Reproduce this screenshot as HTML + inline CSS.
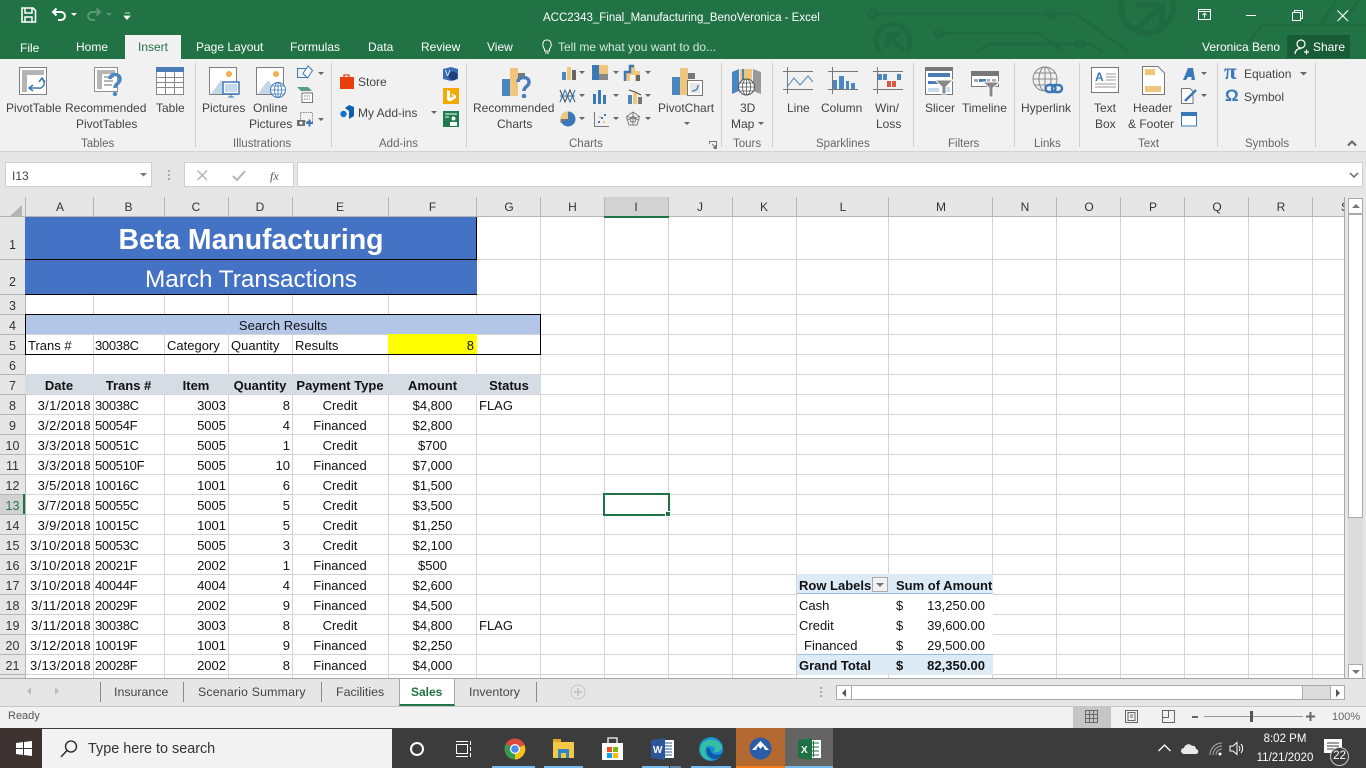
<!DOCTYPE html>
<html><head><meta charset="utf-8"><title>Excel</title>
<style>
html,body{margin:0;padding:0;width:1366px;height:768px;overflow:hidden;background:#fff;font-family:"Liberation Sans",sans-serif;color:#444}
.t{position:absolute;white-space:nowrap;line-height:14px}
.bx{position:absolute}
svg{position:absolute;overflow:visible}
.tab{position:absolute;top:40px;font-size:12px;color:#fff;line-height:14px;white-space:nowrap}
.r{font-size:12px;color:#444}
.g{font-size:11.5px;color:#666;top:137px}
.row{position:absolute;left:0;width:1344px;height:20px;font-size:13px;color:#111;line-height:20px}
.row span{position:absolute;top:2px;white-space:nowrap}
.rh{left:0;width:25px;text-align:center;color:#333;font-size:12.5px}
.a{left:25px;width:66px;text-align:right;letter-spacing:.35px}
.b{left:95px;letter-spacing:-.3px}
.c{left:164px;width:62px;text-align:right}
.d{left:228px;width:62px;text-align:right}
.e{left:292px;width:96px;text-align:center}
.f{left:388px;width:89px;text-align:center}
.h{font-weight:bold}
.ch{position:absolute;top:198px;height:19px;line-height:19px;text-align:center;font-size:12px;color:#333}
.st{font-size:12.4px;color:#444;top:685px}
</style></head><body>

<!-- title bar -->
<div class="bx" style="left:0;top:0;width:1366px;height:59px;background:#217346"></div>
<svg style="left:0;top:0;overflow:hidden" width="1366" height="52" fill="none" stroke="#1f6a41" stroke-width="3">
<path d="M873 14H1076L1129 52M939 33H1039L1064 52M976 52L989 44H1079L1090 44L1103 52"/>
<circle cx="1051" cy="14" r="4"/><circle cx="939" cy="33" r="4"/><circle cx="1080" cy="44" r="4"/><circle cx="873" cy="14" r="4"/>
<circle cx="1147" cy="7" r="26" stroke-width="6"/>
<path d="M1136 30L1160 7M1136 5H1162V30" stroke-width="6"/>
<circle cx="893" cy="41" r="17" stroke-width="5"/><path d="M903 50L889 37M887 48V35H900" stroke-width="5"/>
<path d="M1242 52L1262 25H1366M1320 25L1337 0M1340 25L1360 0" stroke-width="3"/>
</svg>
<!-- QAT -->
<svg style="left:21px;top:7px" width="16" height="16" fill="none" stroke="#fff" stroke-width="1.6"><path d="M1 1H12L14.5 3.500V15H1Z"/><path d="M4 1V6H11V1M4 15V10H11V15" stroke-width="1.5"/></svg>
<svg style="left:51px;top:7px" width="16" height="16" fill="none" stroke="#fff" stroke-width="2"><path d="M2 5H10A3.500 3.500 0 0 1 10 13H7M5.500 1.500L2 5L5.500 8.500"/></svg>
<svg style="left:71px;top:13px" width="7" height="4"><path d="M0 0H6L3 3Z" fill="#fff"/></svg>
<svg style="left:86px;top:7px" width="16" height="16" fill="none" stroke="#5a9775" stroke-width="2"><path d="M14 5H6A3.500 3.500 0 0 0 6 13H9M10.500 1.500L14 5L10.500 8.500"/></svg>
<svg style="left:106px;top:13px" width="7" height="4"><path d="M0 0H6L3 3Z" fill="#5a9775"/></svg>
<svg style="left:124px;top:13px" width="7" height="8"><path d="M1 0H6M0 3H6L3 6.500Z" fill="#fff" stroke="#fff" stroke-width=".7"/></svg>
<div class="t" style="left:543px;top:11px;font-size:11.5px;color:#fff">ACC2343_Final_Manufacturing_BenoVeronica - Excel</div>
<svg style="left:1198px;top:9px" width="14" height="12" fill="none" stroke="#fff"><rect x=".5" y=".5" width="12" height="10"/><path d="M.5 2.500H12.500M6.500 9V4.500M4.500 6L6.500 4.200L8.500 6"/></svg>
<div class="bx" style="left:1246px;top:15px;width:10px;height:1px;background:#fff"></div>
<svg style="left:1292px;top:10px" width="11" height="11" fill="none" stroke="#fff"><rect x=".5" y="2.500" width="8" height="8"/><path d="M2.500 2.500V.5H10.500V8.500H8.500"/></svg>
<svg style="left:1337px;top:10px" width="12" height="12" stroke="#fff" stroke-width="1.100"><path d="M.5 .5L11 11M11 .5L.5 11"/></svg>
<!-- tabs -->
<div class="tab" style="left:20px;top:41px">File</div>
<div class="tab" style="left:76px">Home</div>
<div class="bx" style="left:125px;top:35px;width:56px;height:24px;background:#f1f1f1"></div>
<div class="tab" style="left:138px;color:#217346">Insert</div>
<div class="tab" style="left:196px">Page Layout</div>
<div class="tab" style="left:290px">Formulas</div>
<div class="tab" style="left:368px">Data</div>
<div class="tab" style="left:421px">Review</div>
<div class="tab" style="left:487px">View</div>
<svg style="left:541px;top:39px" width="12" height="16" fill="none" stroke="#fff"><path d="M3.500 10C1 7 1 1 6 1S11 7 8.500 10V12H3.500ZM4 14H8"/></svg>
<div class="tab" style="left:558px;color:#d6e9dd">Tell me what you want to do...</div>
<div class="tab" style="left:1202px">Veronica Beno</div>
<div class="bx" style="left:1287px;top:35px;width:63px;height:23px;background:#185c37"></div>
<svg style="left:1294px;top:39px" width="15" height="16" fill="none" stroke="#fff" stroke-width="1.200"><circle cx="7" cy="5" r="4"/><path d="M1 15C1.500 11 3.500 9.500 7 9.500M10 13H15M12.500 10.500V15.500"/></svg>
<div class="tab" style="left:1313px">Share</div>

<!-- ribbon -->
<div class="bx" style="left:0;top:59px;width:1366px;height:93px;background:#f1f1f1"></div>
<div class="bx" style="left:0;top:151px;width:1366px;height:1px;background:#d2d2d2"></div>
<svg style="left:0;top:59px" width="1366" height="90" stroke="#d0d0d0"><path d="M195.500 4V88M331.500 4V88M466.500 4V88M721.500 4V88M772.500 4V88M913.500 4V88M1014.500 4V88M1079.500 4V88M1217.500 4V88M1315.500 4V88"/></svg>

<!-- Ribbon icons -->
<svg style="left:19px;top:67px" width="28" height="28"><rect x=".5" y=".5" width="27" height="27" fill="#fff" stroke="#808080"/><path d="M3 3H25V8H3ZM3 8H8V25H3Z" fill="#b5b5b5"/><path d="M11 21H19A5 5 0 0 0 23 12M20 15L23 11L26 15M14 18L10 21L14 24" fill="none" stroke="#3b78b7" stroke-width="1.500"/></svg>
<svg style="left:94px;top:67px" width="29" height="30"><rect x=".5" y=".5" width="23" height="24" fill="#fff" stroke="#909090"/><path d="M3 3H21V7H3ZM3 7H8V22H3Z" fill="#b5b5b5"/><path d="M10 10H20M10 14H19M10 18H18" stroke="#b5b5b5" stroke-width="2"/><path d="M16 12C16 6 26 6 26 12C26 17 21 16 21 21" fill="none" stroke="#4a86c0" stroke-width="3.500"/><circle cx="21" cy="27" r="2.200" fill="#4a86c0"/></svg>
<svg style="left:156px;top:67px" width="28" height="28"><rect x=".5" y=".5" width="27" height="27" fill="#fff" stroke="#8a8a8a"/><rect x="0" y="0" width="28" height="5" fill="#4a7db5"/><path d="M1 10.500H27M1 15.500H27M1 20.500H27M9.500 5V27M18.500 5V27" stroke="#8a8a8a"/></svg>
<svg style="left:209px;top:67px" width="31" height="31"><rect x=".5" y=".5" width="27" height="27" fill="#fff" stroke="#808080"/><circle cx="20" cy="7" r="3" fill="#f0b050"/><path d="M2 27L12 13L22 27Z" fill="#c5d6e8"/><rect x="14" y="15" width="16" height="12" fill="#fff" stroke="#3b78b7" stroke-width="1.500"/><rect x="16" y="17" width="12" height="8" fill="#c5d9ec"/><path d="M19 30H25M22 27V30" stroke="#3b78b7"/></svg>
<svg style="left:256px;top:67px" width="31" height="31"><rect x=".5" y=".5" width="27" height="27" fill="#fff" stroke="#808080"/><circle cx="20" cy="7" r="3" fill="#f0b050"/><path d="M2 27L12 13L22 27Z" fill="#c5d6e8"/><circle cx="22" cy="23" r="7.500" fill="#fff" stroke="#3b78b7"/><path d="M14.500 23H29.500M22 15.500V30.500M16 19H28M16 27H28" stroke="#3b78b7" stroke-width=".8"/><ellipse cx="22" cy="23" rx="3.500" ry="7.500" fill="none" stroke="#3b78b7" stroke-width=".8"/></svg>
<svg style="left:297px;top:65px" width="17" height="16" fill="none"><rect x=".5" y="3.500" width="9" height="9" stroke="#3b78b7"/><path d="M11 1L15.500 5.500L10.500 13L6 8.500Z" fill="#fff" stroke="#3b78b7"/></svg>
<svg style="left:297px;top:87px" width="17" height="17"><path d="M0 0H11L15 4H4Z" fill="#5a9e7c"/><rect x="5" y="6" width="10.500" height="9.500" fill="#fff" stroke="#777"/><path d="M7 9H13M7 12H13" stroke="#777" stroke-dasharray="1.500 1"/></svg>
<svg style="left:297px;top:112px" width="17" height="16"><rect x="3.500" y=".5" width="12" height="9" fill="none" stroke="#888" stroke-dasharray="1.500 1"/><rect x="0" y="8" width="8" height="6" fill="#6f6f6f"/><circle cx="4" cy="11" r="1.500" fill="#fff"/><path d="M9 11H16M12.500 7.500V14.500" stroke="#3b78b7" stroke-width="2"/></svg>
<svg style="left:318px;top:72px" width="6" height="60" fill="#666"><path d="M0 0H6L3 3ZM0 46H6L3 49Z"/></svg>
<svg style="left:340px;top:73px" width="15" height="16"><path d="M0 4H14V16H0Z" fill="#e8400c"/><path d="M4 4V2H9V4" fill="none" stroke="#e8400c" stroke-width="1.200"/></svg>
<div class="t r" style="left:358px;top:75px">Store</div>
<svg style="left:340px;top:105px" width="15" height="14"><path d="M5 3L9 0L14 2V11L9 14V6Z" fill="#0f5fb0"/><circle cx="3.500" cy="9" r="3.200" fill="#1173cf"/></svg>
<div class="t r" style="left:358px;top:106px">My Add-ins</div>
<svg style="left:431px;top:111px" width="6" height="4"><path d="M0 0H6L3 3Z" fill="#666"/></svg>
<svg style="left:443px;top:66px" width="16" height="16"><path d="M0 3L8 1L15 3V13L8 15L0 13Z" fill="#3a6bb5"/><circle cx="10" cy="10" r="4.500" fill="#1e3f7a"/><text x="2" y="10" font-size="8" fill="#fff" font-family="Liberation Sans">V</text></svg>
<svg style="left:443px;top:88px" width="16" height="16"><rect width="16" height="16" fill="#f2a900"/><path d="M4 2L7 3V10L11 8L8.500 7L8 5.500L13 7.500V10L7 13.500L4 12Z" fill="#fff"/></svg>
<svg style="left:443px;top:111px" width="16" height="16"><rect width="16" height="16" fill="#1f7a4d"/><path d="M2 3H14M2 6H6" stroke="#fff"/><circle cx="10.500" cy="7.500" r="2" fill="#fff"/><path d="M7 15V11H14V15Z" fill="#fff"/></svg>

<svg style="left:501px;top:67px" width="30" height="32"><rect x="1" y="12" width="8" height="17" fill="#4a86c0"/><rect x="9" y="1" width="8" height="28" fill="#efc67c"/><rect x="17" y="6" width="7" height="6" fill="#777"/><path d="M17 15C17 9 28 9 28 15C28 20 23 19 23 24" fill="none" stroke="#4a7db5" stroke-width="3.500"/><circle cx="23" cy="29" r="2.300" fill="#4a7db5"/></svg>
<!-- small chart icons -->
<svg style="left:561px;top:65px" width="16" height="16"><rect x="1" y="7" width="4" height="8" fill="#4a86c0"/><rect x="6" y="2" width="4" height="13" fill="#efc67c"/><rect x="11" y="5" width="4" height="10" fill="#666"/></svg>
<svg style="left:592px;top:65px" width="18" height="16"><rect x="0" y="0" width="7" height="15" fill="#3a78b8"/><rect x="7" y="0" width="9" height="9" fill="#efc67c"/><rect x="7" y="9" width="9" height="6" fill="#888"/></svg>
<svg style="left:625px;top:66px" width="16" height="15"><path d="M0 15V6H5V0H10V5H15V15H10V9H5V15Z" fill="#efc67c"/><path d="M0 15V6H5V0H9" fill="none" stroke="#3a78b8" stroke-width="2.500"/><rect x="11" y="9" width="4" height="6" fill="#666"/></svg>
<svg style="left:559px;top:88px" width="18" height="16" fill="none" stroke-width="1.100"><path d="M1 14L6 2L11 14L16 2" stroke="#3a78b8"/><path d="M1 2L6 14L11 2L16 14" stroke="#555"/><path d="M1 8H16" stroke="#3a78b8"/></svg>
<svg style="left:592px;top:89px" width="16" height="15" fill="#3a78b8"><path d="M1 5H4V15H1ZM6 1H9V15H6ZM11 6H14V15H11Z"/></svg>
<svg style="left:627px;top:88px" width="16" height="16"><rect x="1" y="7" width="4" height="9" fill="#4a86c0"/><rect x="6" y="5" width="4" height="11" fill="#efc67c"/><rect x="11" y="9" width="4" height="7" fill="#777"/><path d="M2 2L8 4L14 7" stroke="#444" fill="none"/></svg>
<svg style="left:560px;top:111px" width="16" height="16"><circle cx="8" cy="8" r="7.500" fill="#3a78b8"/><path d="M8 8V0.500A7.500 7.500 0 0 0 .5 8Z" fill="#efc67c"/><path d="M8 8H.5V12" fill="#777"/></svg>
<svg style="left:594px;top:112px" width="15" height="15" fill="none"><path d="M.5 0V14.500H15" stroke="#777"/><path d="M4 9h2v2H4zM7 5h2v2H7zM10 2h2v2h-2z" fill="#3a78b8"/><path d="M5 4h2v2H5zM9 9h2v2H9z" fill="#efc67c"/></svg>
<svg style="left:625px;top:111px" width="16" height="16" fill="none" stroke="#777" stroke-width=".9"><path d="M8 1L14.500 5.500L12 14H4L1.500 5.500ZM8 1V14M1.500 5.500L14.500 9M14.500 5.500L1.500 9"/><path d="M8 5L11 7.500L10 11H6L5 7.500Z"/></svg>
<svg style="left:579px;top:71px" width="6" height="60" fill="#666"><path d="M0 0H6L3 3ZM0 23H6L3 26ZM0 46H6L3 49Z"/></svg>
<svg style="left:613px;top:71px" width="6" height="60" fill="#666"><path d="M0 0H6L3 3ZM0 23H6L3 26ZM0 46H6L3 49Z"/></svg>
<svg style="left:645px;top:71px" width="6" height="60" fill="#666"><path d="M0 0H6L3 3ZM0 23H6L3 26ZM0 46H6L3 49Z"/></svg>
<svg style="left:672px;top:67px" width="31" height="30"><rect x="0" y="10" width="8" height="18" fill="#4a86c0"/><rect x="8" y="1" width="8" height="27" fill="#efc67c"/><rect x="16" y="6" width="7" height="6" fill="#777"/><rect x="15.500" y="13.500" width="15" height="15" fill="#fff" stroke="#777"/><path d="M18 16H28V26H18Z" fill="#e6e6e6"/><path d="M20 24C24 24 26 22 26 18" fill="none" stroke="#3a78b8" stroke-width="1.200"/></svg>
<svg style="left:684px;top:122px" width="6" height="4"><path d="M0 0H6L3 3Z" fill="#666"/></svg>
<svg style="left:731px;top:67px" width="31" height="30"><path d="M1 5L8 2V24L1 27Z" fill="#4a86c0"/><path d="M9 2H21V24H9Z" fill="#efc67c"/><path d="M12 2V24" stroke="#4a86c0" stroke-width="2"/><path d="M22 2L30 5V27L22 24Z" fill="#999"/><circle cx="15.500" cy="20" r="8" fill="#fff" stroke="#555"/><path d="M7.500 20H23.500M15.500 12V28M9 16H22M9 24H22" stroke="#555" stroke-width=".8"/><ellipse cx="15.500" cy="20" rx="4" ry="8" fill="none" stroke="#555" stroke-width=".8"/></svg>
<!-- sparklines -->
<svg style="left:783px;top:67px" width="30" height="27" fill="none"><path d="M0 4.500H30M0 22.500H30M4.500 0V27" stroke="#777"/><path d="M4 20L11 11L17 18L25 9L30 15" stroke="#4a86c0"/></svg>
<svg style="left:828px;top:67px" width="30" height="27"><path d="M0 4.500H30M0 22.500H30M4.500 0V27" stroke="#777"/><path d="M5 13H9V22H5ZM11 9H16V22H11ZM18 14H21V22H18ZM23 16H27V22H23Z" fill="#4a86c0"/></svg>
<svg style="left:873px;top:67px" width="30" height="27"><path d="M0 4.500H30M0 22.500H30M4.500 0V27" stroke="#777"/><path d="M5 7H9V13H5ZM10 7H14V13H10ZM24 7H28V13H24Z" fill="#4a86c0"/><path d="M14 14H18V20H14ZM19 14H23V20H19Z" fill="#d9593a"/></svg>
<!-- filters -->
<svg style="left:925px;top:67px" width="29" height="28"><rect x=".5" y=".5" width="27" height="27" fill="#fff" stroke="#777"/><rect width="28" height="4" fill="#777"/><path d="M3 6H25V10H3Z" fill="#4a7db5"/><path d="M3 14H14V17H3Z" fill="#4a7db5"/><path d="M3 21H14V25H3ZM20 20H25V25H20Z" fill="#c5d9ec"/><path d="M10 13H28L21 20V27H17V20Z" fill="#888" stroke="#fff"/></svg>
<svg style="left:971px;top:71px" width="29" height="27"><rect x=".5" y=".5" width="27" height="15" fill="#fff" stroke="#777"/><rect width="28" height="5" fill="#777"/><path d="M3 8H7V11H3ZM16 8H19V11H16ZM21 8H25V11H21Z" fill="#aaa"/><path d="M8 8H15V11H8Z" fill="#4a7db5"/><path d="M12 11H29L22 17V26H18V17Z" fill="#888" stroke="#fff"/></svg>
<!-- hyperlink -->
<svg style="left:1032px;top:66px" width="32" height="32" fill="none"><circle cx="13" cy="13" r="12" stroke="#888"/><ellipse cx="13" cy="13" rx="6" ry="12" stroke="#888"/><path d="M1 13H25M13 1V25M3 7H23M3 19H23" stroke="#888"/><rect x="13.500" y="19" width="10" height="7" rx="3.500" stroke="#3a78b8" stroke-width="2.500" fill="#f1f1f1"/><rect x="20" y="19" width="10" height="7" rx="3.500" stroke="#3a78b8" stroke-width="2.500"/></svg>
<!-- text -->
<svg style="left:1091px;top:67px" width="29" height="26"><rect x=".5" y=".5" width="27" height="25" fill="#fff" stroke="#777"/><path d="M15 7H25M15 10H25M15 13H25M4 17H25M4 20H25" stroke="#999"/><text x="4" y="14" font-size="12" font-weight="bold" fill="#3a78b8" font-family="Liberation Sans">A</text></svg>
<svg style="left:1142px;top:66px" width="23" height="29"><path d="M.5 .5H16L22.500 7V28.500H.5Z" fill="#fff" stroke="#777"/><rect x="3" y="3" width="10" height="6" fill="#efc67c"/><rect x="3" y="20" width="16" height="6" fill="#efc67c"/></svg>
<svg style="left:1182px;top:67px" width="14" height="14"><path d="M1 13L6 1H11L13 13H9.500V10H6L4 13Z" fill="#3a78b8"/></svg>
<svg style="left:1181px;top:88px" width="17" height="16" fill="none"><path d="M.5 .5H9L12 3.500V15.500H.5Z" stroke="#777" fill="#fff"/><path d="M4 13L15 2" stroke="#3a78b8" stroke-width="2.500"/></svg>
<svg style="left:1181px;top:112px" width="16" height="15"><rect x=".5" y=".5" width="15" height="13.500" fill="#fff" stroke="#3a78b8"/><rect width="16" height="4" fill="#3a78b8"/></svg>
<svg style="left:1201px;top:72px" width="6" height="26" fill="#666"><path d="M0 0H6L3 3ZM0 22H6L3 25Z"/></svg>
<div class="t" style="left:1224px;top:61px;font-size:23px;font-family:'Liberation Serif';color:#3a78b8;line-height:22px;font-weight:bold">π</div>
<div class="t r" style="left:1244px;top:67px">Equation</div>
<svg style="left:1300px;top:72px" width="7" height="4"><path d="M0 0H7L3.500 3.500Z" fill="#666"/></svg>
<div class="t" style="left:1225px;top:87px;font-size:17px;color:#3a78b8;line-height:18px;font-weight:bold">Ω</div>
<div class="t r" style="left:1244px;top:90px">Symbol</div>
<svg style="left:1347px;top:140px" width="10" height="7" fill="none" stroke="#666" stroke-width="2"><path d="M1 5.500L5 1.500L9 5.500"/></svg>

<!-- ribbon labels -->
<div class="t r" style="left:6px;top:101px">PivotTable</div>
<div class="t r" style="left:65px;top:101px">Recommended</div>
<div class="t r" style="left:76px;top:117px">PivotTables</div>
<div class="t r" style="left:156px;top:101px">Table</div>
<div class="t r" style="left:202px;top:101px">Pictures</div>
<div class="t r" style="left:253px;top:101px">Online</div>
<div class="t r" style="left:249px;top:117px">Pictures</div>
<div class="t r" style="left:473px;top:101px">Recommended</div>
<div class="t r" style="left:497px;top:117px">Charts</div>
<div class="t r" style="left:658px;top:101px">PivotChart</div>
<div class="t r" style="left:740px;top:101px">3D</div>
<div class="t r" style="left:731px;top:117px">Map</div>
<svg style="left:758px;top:122px" width="6" height="4"><path d="M0 0H6L3 3Z" fill="#666"/></svg>
<div class="t r" style="left:787px;top:101px">Line</div>
<div class="t r" style="left:821px;top:101px">Column</div>
<div class="t r" style="left:875px;top:101px">Win/</div>
<div class="t r" style="left:876px;top:117px">Loss</div>
<div class="t r" style="left:925px;top:101px">Slicer</div>
<div class="t r" style="left:962px;top:101px">Timeline</div>
<div class="t r" style="left:1021px;top:101px">Hyperlink</div>
<div class="t r" style="left:1094px;top:101px">Text</div>
<div class="t r" style="left:1095px;top:117px">Box</div>
<div class="t r" style="left:1133px;top:101px">Header</div>
<div class="t r" style="left:1128px;top:117px">&amp; Footer</div>
<div class="t r g" style="left:81px">Tables</div>
<div class="t r g" style="left:233px">Illustrations</div>
<div class="t r g" style="left:379px">Add-ins</div>
<div class="t r g" style="left:569px">Charts</div>
<div class="t r g" style="left:733px">Tours</div>
<div class="t r g" style="left:816px">Sparklines</div>
<div class="t r g" style="left:948px">Filters</div>
<div class="t r g" style="left:1034px">Links</div>
<div class="t r g" style="left:1138px">Text</div>
<div class="t r g" style="left:1245px">Symbols</div>
<svg style="left:709px;top:141px" width="8" height="8" fill="none" stroke="#777"><path d="M.5 3V.5H7.500V7.500H5M3 3L6.500 6.500M6.500 4V6.500H4"/></svg>

<!-- formula bar -->
<div class="bx" style="left:0;top:152px;width:1366px;height:45px;background:#e6e6e6"></div>
<div class="bx" style="left:5px;top:162px;width:147px;height:25px;background:#fff;border:1px solid #d0d0d0;box-sizing:border-box"></div>
<div class="t" style="left:12px;top:169px;font-size:12px;color:#444">I13</div>
<svg style="left:140px;top:173px" width="7" height="4"><path d="M0 0H7L3.500 3.500Z" fill="#777"/></svg>
<svg style="left:168px;top:170px" width="3" height="12" fill="#aaa"><path d="M0 0h2v2H0zM0 4h2v2H0zM0 8h2v2H0z"/></svg>
<div class="bx" style="left:184px;top:162px;width:110px;height:25px;background:#fff;border:1px solid #d0d0d0;box-sizing:border-box"></div>
<svg style="left:197px;top:170px" width="11" height="11" stroke="#b5b5b5" stroke-width="1.500"><path d="M.5 .5L10 10M10 .5L.5 10"/></svg>
<svg style="left:232px;top:170px" width="14" height="11" fill="none" stroke="#b5b5b5" stroke-width="2"><path d="M1 6L5 10L13 1"/></svg>
<div class="t" style="left:270px;top:169px;font-size:12px;font-family:'Liberation Serif';font-style:italic;color:#555">fx</div>
<div class="bx" style="left:297px;top:162px;width:1066px;height:25px;background:#fff;border:1px solid #d0d0d0;box-sizing:border-box"></div>
<svg style="left:1349px;top:172px" width="10" height="6" fill="none" stroke="#666" stroke-width="1.500"><path d="M1 1L5 5L9 1"/></svg>

<!-- column headers -->
<div class="bx" style="left:0;top:197px;width:1348px;height:20px;background:#e6e6e6"></div>
<div class="bx" style="left:604px;top:197px;width:65px;height:20px;background:#d2d2d2"></div>
<div class="bx" style="left:0;top:217px;width:25px;height:462px;background:#e6e6e6"></div>
<div class="bx" style="left:0;top:494px;width:25px;height:20px;background:#d2d2d2"></div>
<svg style="left:10px;top:205px" width="12" height="11"><path d="M12 0V11H0Z" fill="#b5b5b5"/></svg>

<!-- grid -->
<svg style="left:0;top:197px" width="1348" height="482" shape-rendering="crispEdges">
<g stroke="#b5b5b5"><path d="M93.500 0V20M164.500 0V20M228.500 0V20M292.500 0V20M388.500 0V20M476.500 0V20M540.500 0V20M604.500 0V20M668.500 0V20M732.500 0V20M796.500 0V20M888.500 0V20M992.500 0V20M1056.500 0V20M1120.500 0V20M1184.500 0V20M1248.500 0V20M1312.500 0V20M1344.500 0V20"/></g>
<g stroke="#d4d4d4"><path d="M93.500 20V482M164.500 20V482M228.500 20V482M292.500 20V482M388.500 20V482M476.500 20V482M540.500 20V482M604.500 20V482M668.500 20V482M732.500 20V482M796.500 20V482M888.500 20V482M992.500 20V482M1056.500 20V482M1120.500 20V482M1184.500 20V482M1248.500 20V482M1312.500 20V482"/>
<path d="M25 62.500H1344M25 97.500H1344M25 117.500H1344M25 137.500H1344M25 157.500H1344M25 177.500H1344M25 197.500H1344M25 217.500H1344M25 237.500H1344M25 257.500H1344M25 277.500H1344M25 297.500H1344M25 317.500H1344M25 337.500H1344M25 357.500H1344M25 377.500H1344M25 397.500H1344M25 417.500H1344M25 437.500H1344M25 457.500H1344M25 477.500H1344"/></g>
<g stroke="#b5b5b5"><path d="M0 19.500H1344M25.500 0V482M1344.500 20V482M0 62.500H25M0 97.500H25M0 117.500H25M0 137.500H25M0 157.500H25M0 177.500H25M0 197.500H25M0 217.500H25M0 237.500H25M0 257.500H25M0 277.500H25M0 297.500H25M0 317.500H25M0 337.500H25M0 357.500H25M0 377.500H25M0 397.500H25M0 417.500H25M0 437.500H25M0 457.500H25M0 477.500H25"/></g>
</svg>
<div class="bx" style="left:604px;top:216px;width:65px;height:2px;background:#217346"></div>
<div class="bx" style="left:23px;top:494px;width:2px;height:20px;background:#217346"></div>

<div class="ch" style="left:26px;width:68px">A</div><div class="ch" style="left:93px;width:71px">B</div><div class="ch" style="left:164px;width:64px">C</div><div class="ch" style="left:228px;width:64px">D</div><div class="ch" style="left:292px;width:96px">E</div><div class="ch" style="left:388px;width:89px">F</div><div class="ch" style="left:477px;width:64px">G</div><div class="ch" style="left:541px;width:63px">H</div><div class="ch" style="left:604px;width:64px">I</div><div class="ch" style="left:668px;width:64px">J</div><div class="ch" style="left:732px;width:64px">K</div><div class="ch" style="left:797px;width:92px">L</div><div class="ch" style="left:889px;width:104px">M</div><div class="ch" style="left:993px;width:64px">N</div><div class="ch" style="left:1057px;width:64px">O</div><div class="ch" style="left:1121px;width:64px">P</div><div class="ch" style="left:1185px;width:64px">Q</div><div class="ch" style="left:1249px;width:64px">R</div><div class="ch" style="left:1341px;width:8px;overflow:hidden">S</div>

<!-- filled areas -->
<div class="bx" style="left:25px;top:217px;width:452px;height:77px;background:#4472c4"></div>
<div class="bx" style="left:25px;top:259px;width:452px;height:1px;background:#000"></div>
<div class="bx" style="left:25px;top:294px;width:452px;height:1px;background:#000"></div>
<div class="bx" style="left:476px;top:217px;width:1px;height:43px;background:#000"></div>
<div class="t" style="left:25px;top:222px;width:452px;text-align:center;font-size:28.4px;line-height:36px;font-weight:bold;color:#fff">Beta Manufacturing</div>
<div class="t" style="left:25px;top:265px;width:452px;text-align:center;font-size:24.3px;line-height:30px;color:#fff">March Transactions</div>
<div class="bx" style="left:25px;top:314px;width:516px;height:41px;box-sizing:border-box;border:1px solid #000"></div>
<div class="bx" style="left:26px;top:315px;width:514px;height:19px;background:#b4c6e7"></div>
<div class="bx" style="left:388px;top:334px;width:89px;height:20px;background:#ff0"></div>
<div class="t" style="left:26px;top:319px;width:514px;text-align:center;font-size:13px;color:#111">Search Results</div>
<div class="bx" style="left:25px;top:374px;width:516px;height:20px;background:#d6dce4"></div>

<!-- rows -->
<div class="row" style="top:233px"><span class="rh">1</span></div>
<div class="row" style="top:270px"><span class="rh">2</span></div>
<div class="row" style="top:294px"><span class="rh">3</span></div>
<div class="row" style="top:314px"><span class="rh">4</span></div>
<div class="row" style="top:334px"><span class="rh">5</span><span style="left:28px">Trans #</span><span class="b">30038C</span><span style="left:167px">Category</span><span style="left:231px">Quantity</span><span style="left:295px">Results</span><span style="left:388px;width:86px;text-align:right">8</span></div>
<div class="row" style="top:354px"><span class="rh">6</span></div>
<div class="row h" style="top:374px"><span class="rh" style="font-weight:normal">7</span><span style="left:25px;width:68px;text-align:center">Date</span><span style="left:93px;width:71px;text-align:center">Trans #</span><span style="left:164px;width:64px;text-align:center">Item</span><span style="left:228px;width:64px;text-align:center">Quantity</span><span class="e">Payment Type</span><span class="f">Amount</span><span style="left:477px;width:64px;text-align:center">Status</span></div>
<div class="row" style="top:394px"><span class="rh">8</span><span class="a">3/1/2018</span><span class="b">30038C</span><span class="c">3003</span><span class="d">8</span><span class="e">Credit</span><span class="f">$4,800</span><span style="left:479px">FLAG</span></div>
<div class="row" style="top:414px"><span class="rh">9</span><span class="a">3/2/2018</span><span class="b">50054F</span><span class="c">5005</span><span class="d">4</span><span class="e">Financed</span><span class="f">$2,800</span></div>
<div class="row" style="top:434px"><span class="rh">10</span><span class="a">3/3/2018</span><span class="b">50051C</span><span class="c">5005</span><span class="d">1</span><span class="e">Credit</span><span class="f">$700</span></div>
<div class="row" style="top:454px"><span class="rh">11</span><span class="a">3/3/2018</span><span class="b">500510F</span><span class="c">5005</span><span class="d">10</span><span class="e">Financed</span><span class="f">$7,000</span></div>
<div class="row" style="top:474px"><span class="rh">12</span><span class="a">3/5/2018</span><span class="b">10016C</span><span class="c">1001</span><span class="d">6</span><span class="e">Credit</span><span class="f">$1,500</span></div>
<div class="row" style="top:494px"><span class="rh" style="color:#217346">13</span><span class="a">3/7/2018</span><span class="b">50055C</span><span class="c">5005</span><span class="d">5</span><span class="e">Credit</span><span class="f">$3,500</span></div>
<div class="row" style="top:514px"><span class="rh">14</span><span class="a">3/9/2018</span><span class="b">10015C</span><span class="c">1001</span><span class="d">5</span><span class="e">Credit</span><span class="f">$1,250</span></div>
<div class="row" style="top:534px"><span class="rh">15</span><span class="a">3/10/2018</span><span class="b">50053C</span><span class="c">5005</span><span class="d">3</span><span class="e">Credit</span><span class="f">$2,100</span></div>
<div class="row" style="top:554px"><span class="rh">16</span><span class="a">3/10/2018</span><span class="b">20021F</span><span class="c">2002</span><span class="d">1</span><span class="e">Financed</span><span class="f">$500</span></div>
<div class="row" style="top:574px"><span class="rh">17</span><span class="a">3/10/2018</span><span class="b">40044F</span><span class="c">4004</span><span class="d">4</span><span class="e">Financed</span><span class="f">$2,600</span></div>
<div class="row" style="top:594px"><span class="rh">18</span><span class="a">3/11/2018</span><span class="b">20029F</span><span class="c">2002</span><span class="d">9</span><span class="e">Financed</span><span class="f">$4,500</span></div>
<div class="row" style="top:614px"><span class="rh">19</span><span class="a">3/11/2018</span><span class="b">30038C</span><span class="c">3003</span><span class="d">8</span><span class="e">Credit</span><span class="f">$4,800</span><span style="left:479px">FLAG</span></div>
<div class="row" style="top:634px"><span class="rh">20</span><span class="a">3/12/2018</span><span class="b">10019F</span><span class="c">1001</span><span class="d">9</span><span class="e">Financed</span><span class="f">$2,250</span></div>
<div class="row" style="top:654px"><span class="rh">21</span><span class="a">3/13/2018</span><span class="b">20028F</span><span class="c">2002</span><span class="d">8</span><span class="e">Financed</span><span class="f">$4,000</span></div>

<!-- pivot -->
<div class="bx" style="left:797px;top:594px;width:196px;height:60px;background:#fff"></div>
<div class="bx" style="left:797px;top:574px;width:196px;height:20px;background:#ddebf7;border-bottom:1px solid #9bc2e6;box-sizing:border-box"></div>
<div class="bx" style="left:797px;top:654px;width:196px;height:21px;background:#ddebf7;border-top:1px solid #9bc2e6;box-sizing:border-box"></div>
<div class="bx" style="left:872px;top:577px;width:16px;height:15px;background:#f1f1f1;border:1px solid #aaa;box-sizing:border-box"></div>
<svg style="left:876px;top:583px" width="8" height="4"><path d="M0 0H8L4 4Z" fill="#777"/></svg>
<div class="row h" style="top:574px"><span style="left:799px">Row Labels</span><span style="left:896px">Sum of Amount</span></div>
<div class="row" style="top:594px"><span style="left:799px">Cash</span><span style="left:896px">$</span><span style="left:900px;width:85px;text-align:right">13,250.00</span></div>
<div class="row" style="top:614px"><span style="left:799px">Credit</span><span style="left:896px">$</span><span style="left:900px;width:85px;text-align:right">39,600.00</span></div>
<div class="row" style="top:634px"><span style="left:804px">Financed</span><span style="left:896px">$</span><span style="left:900px;width:85px;text-align:right">29,500.00</span></div>
<div class="row h" style="top:654px"><span style="left:799px">Grand Total</span><span style="left:896px">$</span><span style="left:900px;width:85px;text-align:right">82,350.00</span></div>

<!-- selection -->
<div class="bx" style="left:603px;top:493px;width:67px;height:23px;box-sizing:border-box;border:2px solid #217346"></div>
<div class="bx" style="left:665px;top:511px;width:6px;height:6px;background:#217346;border:1px solid #fff;box-sizing:border-box"></div>

<!-- vertical scrollbar -->
<div class="bx" style="left:1345px;top:197px;width:21px;height:482px;background:#e6e6e6"></div>
<div class="bx" style="left:1344px;top:197px;width:1px;height:482px;background:#a8a8a8"></div>
<div class="bx" style="left:1348px;top:198px;width:15px;height:16px;background:#fff;border:1px solid #ababab;box-sizing:border-box"></div>
<svg style="left:1352px;top:204px" width="8" height="4"><path d="M0 4H8L4 0Z" fill="#777"/></svg>
<div class="bx" style="left:1348px;top:214px;width:15px;height:304px;background:#fff;border:1px solid #ababab;box-sizing:border-box"></div>
<div class="bx" style="left:1348px;top:518px;width:15px;height:146px;background:#dcdcdc"></div>
<div class="bx" style="left:1348px;top:664px;width:15px;height:15px;background:#fff;border:1px solid #ababab;box-sizing:border-box"></div>
<svg style="left:1352px;top:670px" width="8" height="4"><path d="M0 0H8L4 4Z" fill="#777"/></svg>

<!-- sheet tabs -->
<div class="bx" style="left:0;top:678px;width:1366px;height:29px;background:#e6e6e6;border-top:1px solid #a8a8a8;box-sizing:border-box"></div>
<div class="bx" style="left:0;top:706px;width:1366px;height:1px;background:#c6c6c6"></div>
<svg style="left:27px;top:687px" width="32" height="9" fill="#bdbdbd"><path d="M4 0V8L0 4ZM28 0V8L32 4Z"/></svg>
<svg style="left:100px;top:682px" width="440" height="21" stroke="#8a8a8a"><path d="M.5 0V20M83.500 0V20M221.500 0V20M436.500 0V20"/></svg>
<div class="bx" style="left:399px;top:679px;width:56px;height:27px;background:#fff;border-left:1px solid #a8a8a8;border-right:1px solid #a8a8a8;border-bottom:2px solid #217346;box-sizing:border-box"></div>
<div class="t st" style="left:114px">Insurance</div>
<div class="t st" style="left:198px;letter-spacing:.15px">Scenario Summary</div>
<div class="t st" style="left:336px">Facilities</div>
<div class="t st" style="left:411px;font-size:12px;font-weight:bold;color:#217346">Sales</div>
<div class="t st" style="left:469px">Inventory</div>
<svg style="left:570px;top:684px" width="16" height="16" fill="none" stroke="#c6c6c6"><circle cx="8" cy="8" r="7"/><path d="M4 8H12M8 4V12" stroke-width="2"/></svg>
<svg style="left:820px;top:687px" width="3" height="12" fill="#aaa"><path d="M0 0h2v2H0zM0 4h2v2H0zM0 8h2v2H0z"/></svg>
<div class="bx" style="left:836px;top:685px;width:509px;height:15px;background:#dcdcdc;border:1px solid #ababab;box-sizing:border-box"></div>
<div class="bx" style="left:851px;top:685px;width:452px;height:15px;background:#fff;border:1px solid #ababab;box-sizing:border-box"></div>
<div class="bx" style="left:836px;top:685px;width:16px;height:15px;background:#fff;border:1px solid #ababab;box-sizing:border-box"></div>
<svg style="left:842px;top:689px" width="4" height="8"><path d="M4 0V8L0 4Z" fill="#555"/></svg>
<div class="bx" style="left:1330px;top:685px;width:15px;height:15px;background:#fff;border:1px solid #ababab;box-sizing:border-box"></div>
<svg style="left:1336px;top:689px" width="4" height="8"><path d="M0 0V8L4 4Z" fill="#555"/></svg>

<!-- status bar -->
<div class="bx" style="left:0;top:707px;width:1366px;height:21px;background:#f1f1f1"></div>
<div class="t" style="left:8px;top:709px;font-size:11px;color:#555">Ready</div>
<div class="bx" style="left:1073px;top:707px;width:38px;height:21px;background:#c6c6c6"></div>
<svg style="left:1085px;top:710px" width="14" height="14" fill="none" stroke="#666"><path d="M.5 .5H12.500V12.500H.5ZM.5 4.500H12.500M.5 8.500H12.500M4.500 .5V12.500M8.500 .5V12.500"/></svg>
<svg style="left:1125px;top:710px" width="14" height="14" fill="none" stroke="#666"><path d="M.5 .5H12.500V12.500H.5ZM3 2.500H10V10.500H3ZM5 5H8M5 7H8"/></svg>
<svg style="left:1162px;top:710px" width="14" height="14" fill="none" stroke="#666"><path d="M.5 .5H12.500V12.500H.5ZM.5 7.500H6.500V.5"/></svg>
<div class="bx" style="left:1192px;top:716px;width:6px;height:2px;background:#666"></div>
<div class="bx" style="left:1204px;top:716px;width:99px;height:1px;background:#999"></div>
<div class="bx" style="left:1250px;top:711px;width:3px;height:11px;background:#555"></div>
<svg style="left:1306px;top:712px" width="9" height="9" stroke="#666" stroke-width="2"><path d="M0 4.500H9M4.500 0V9"/></svg>
<div class="t" style="left:1332px;top:710px;font-size:11px;color:#666">100%</div>

<!-- taskbar -->
<div class="bx" style="left:0;top:728px;width:1366px;height:40px;background:#3c3c3c"></div>
<div class="bx" style="left:0;top:728px;width:42px;height:40px;background:#3e3230"></div>
<svg style="left:16px;top:741px" width="16" height="15" fill="#fff"><path d="M0 2L7 1V7H0ZM8 1L16 0V7H8ZM0 8H7V14L0 13ZM8 8H16V15L8 14Z"/></svg>
<div class="bx" style="left:42px;top:729px;width:350px;height:39px;background:#f2f2f2"></div>
<svg style="left:60px;top:740px" width="18" height="18" fill="none" stroke="#222" stroke-width="1.300"><circle cx="11" cy="6.500" r="5.500"/><path d="M7 10.500L1 17"/></svg>
<div class="t" style="left:88px;top:741px;font-size:14.4px;line-height:16px;color:#333">Type here to search</div>
<svg style="left:409px;top:741px" width="16" height="16" fill="none" stroke="#fff" stroke-width="2"><circle cx="8" cy="8" r="6"/></svg>
<svg style="left:456px;top:741px" width="16" height="16" fill="none" stroke="#fff"><path d="M0 .5H12M0 15.500H12M.5 3.500H11.500V12.500H.5ZM14.500 0V4M14.500 6V10M14.500 12V16"/></svg>
<svg style="left:504px;top:738px" width="22" height="22"><circle cx="11" cy="11" r="10.500" fill="#dd4b3e"/><path d="M11 11L20.500 7A10.500 10.500 0 0 1 11 21.500Z" fill="#f3c319"/><path d="M11 11L11 21.500A10.500 10.500 0 0 1 2 6Z" fill="#2f9e4f"/><circle cx="11" cy="11" r="5" fill="#fff"/><circle cx="11" cy="11" r="3.800" fill="#4a8cf0"/></svg>
<svg style="left:553px;top:739px" width="21" height="20"><path d="M0 0H8V3H0Z" fill="#e0a52a"/><rect y="3" width="21" height="16" fill="#f5c945"/><rect x="5" y="10" width="11" height="9" fill="#2f87c8"/><rect x="8" y="14" width="5" height="5" fill="#f5c945"/></svg>
<svg style="left:602px;top:736px" width="21" height="24"><path d="M6 7V2H15V7" fill="none" stroke="#ddd" stroke-width="1.500"/><rect y="7" width="21" height="17" fill="#fff"/><rect x="5" y="11" width="5" height="5" fill="#e8502a"/><rect x="11" y="11" width="5" height="5" fill="#7fba00"/><rect x="5" y="17" width="5" height="5" fill="#00a4ef"/><rect x="11" y="17" width="5" height="5" fill="#ffb900"/></svg>
<svg style="left:651px;top:738px" width="24" height="22"><rect x="8" y="2" width="15" height="18" fill="#fff"/><path d="M11 5H21M11 8H21M11 11H21M11 14H21M11 17H21" stroke="#2b5797"/><path d="M0 2L14 0V22L0 20Z" fill="#2b579a"/><text x="2" y="15" font-size="10" font-weight="bold" fill="#fff" font-family="Liberation Sans">W</text></svg>
<svg style="left:699px;top:737px" width="24" height="24"><circle cx="12" cy="12" r="12" fill="#1b8fd6"/><path d="M2 8C6 1 18 0 23 9C24 14 18 16 14 15C19 12 14 8 9 9C4 11 6 20 13 23C6 24 -1 17 2 8Z" fill="#35c0a5"/><path d="M8 10C6 16 10 22 17 22C20 21 22 19 23 16C19 19 12 18 11 12Z" fill="#0c59a4"/></svg>
<div class="bx" style="left:736px;top:728px;width:49px;height:40px;background:#b3692f"></div>
<svg style="left:749px;top:737px" width="23" height="23"><circle cx="11.500" cy="11.500" r="11" fill="#2a5ca8"/><path d="M3 13L11.500 4L20 13L16 13L14 9L11.500 12L9 9L7 13Z" fill="#fff"/></svg>
<div class="bx" style="left:785px;top:728px;width:48px;height:40px;background:#646464"></div>
<svg style="left:798px;top:738px" width="24" height="22"><rect x="8" y="2" width="15" height="18" fill="#fff"/><path d="M11 5H21M11 9H21M11 13H21M11 17H21M15.500 3V19" stroke="#1e7145"/><path d="M0 2L14 0V22L0 20Z" fill="#1e7145"/><text x="3" y="15" font-size="10" font-weight="bold" fill="#fff" font-family="Liberation Sans">X</text></svg>
<div class="bx" style="left:642px;top:766px;width:27px;height:2px;background:#76b9ed"></div>
<div class="bx" style="left:670px;top:766px;width:11px;height:2px;background:#76b9ed;opacity:.6"></div>
<div class="bx" style="left:691px;top:766px;width:40px;height:2px;background:#76b9ed"></div>
<div class="bx" style="left:736px;top:766px;width:49px;height:2px;background:#f47b16"></div>
<div class="bx" style="left:785px;top:766px;width:48px;height:2px;background:#76b9ed"></div>
<div class="bx" style="left:492px;top:766px;width:43px;height:2px;background:#76b9ed"></div>
<div class="bx" style="left:544px;top:766px;width:39px;height:2px;background:#76b9ed"></div>
<svg style="left:1158px;top:744px" width="13" height="8" fill="none" stroke="#fff" stroke-width="1.300"><path d="M.5 7L6.500 1L12.500 7"/></svg>
<svg style="left:1181px;top:743px" width="18" height="11" fill="#e8e8e8"><path d="M3 11A3 3 0 0 1 3 5C4 1 9 0 11 3C14 2 15 5 15 6C18 6 18 11 15 11Z"/></svg>
<svg style="left:1209px;top:742px" width="14" height="14" fill="none" stroke="#aaa"><path d="M1 13A12 12 0 0 1 13 1M4 13A9 9 0 0 1 13 4M7 13A6 6 0 0 1 13 7"/><circle cx="11" cy="12" r="1.500" fill="#fff" stroke="none"/></svg>
<svg style="left:1229px;top:741px" width="15" height="15" fill="none" stroke="#fff"><path d="M1 5H4L8 1.500V13.500L4 10H1Z"/><path d="M10 5A4 4 0 0 1 10 10M12 3A7 7 0 0 1 12 12"/></svg>
<div class="t" style="left:1252px;top:732px;width:66px;text-align:center;font-size:11.500px;color:#fff">8:02 PM</div>
<div class="t" style="left:1252px;top:751px;width:66px;text-align:center;font-size:11.500px;color:#fff">11/21/2020</div>
<svg style="left:1324px;top:739px" width="18" height="14"><path d="M0 0H18V14H0Z" fill="#fff"/><path d="M3 4H15M3 7H15M3 10H11" stroke="#3c3c3c"/></svg>
<div class="bx" style="left:1330px;top:747px;width:19px;height:19px;box-sizing:border-box;border:1px solid #ccc;border-radius:50%;background:#3c3c3c;color:#fff;font-size:11.500px;line-height:17px;text-align:center">22</div>
</body></html>
